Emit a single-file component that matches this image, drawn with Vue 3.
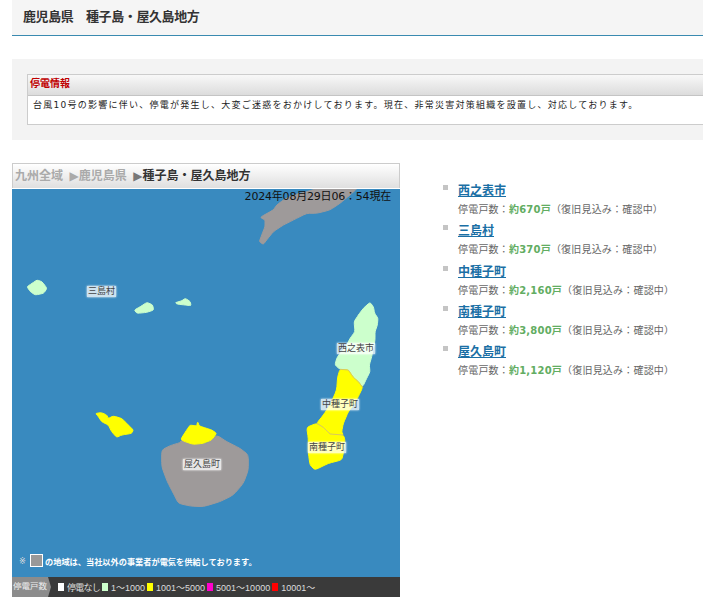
<script setup>
const green = '#ccffcc'
const yellow = '#ffff00'
const gray = '#9e9a9a'

// outlines traced on the reference, [origin x, origin y, then x,y pairs at 3x]
const shapes = [
  { fill: gray, o: [240, 185], p: '60,97 100,75 110,60 130,45 160,30 200,20 250,5 350,0 350,12 330,30 300,55 270,75 230,85 200,85 160,105 130,120 100,140 80,165 70,178 58,170 65,150 75,125 75,105' },
  { fill: green, o: [12, 190], p: '45,290 60,280 75,270 90,275 105,295 95,310 70,315 55,305' },
  { fill: green, o: [12, 190], p: '367,360 385,350 405,337 422,345 425,360 405,367 375,370' },
  { fill: green, o: [12, 190], p: '490,338 510,332 520,325 535,335 537,347 520,345 495,342' },
  { fill: green, o: [290, 290], p: '240,37 250,50 254,70 264,85 262,105 255,125 255,150 250,175 245,200 238,225 240,245 230,265 218,290 205,275 190,262 175,240 150,238 135,225 140,205 150,190 165,175 180,145 195,125 192,95 205,75 220,55' },
  { fill: yellow, o: [290, 290], p: '150,238 175,240 190,262 205,275 218,292 205,320 190,345 175,365 160,400 155,425 160,435 120,432 100,412 80,400 100,375 120,345 140,300 143,260' },
  { fill: yellow, o: [290, 290], p: '80,400 100,412 120,432 160,435 165,450 160,490 155,510 115,520 75,540 60,525 55,490 55,445 50,412' },
  { fill: gray, o: [80, 400], p: '305,120 340,130 380,132 410,105 440,125 480,145 505,165 505,210 490,250 460,285 420,305 370,320 330,318 295,310 280,280 262,245 245,200 245,150 270,137 300,128' },
  { fill: yellow, o: [80, 400], p: '302,118 320,90 330,75 350,78 353,65 358,78 380,85 395,90 410,100 395,120 370,130 340,133 315,125' },
  { fill: yellow, o: [80, 400], p: '47,40 65,38 80,45 85,55 100,48 125,55 145,75 160,90 155,100 125,105 110,112 95,95 85,75 65,65 55,50' }
]

const borders = [
  { o: [290, 290], p: '150,238 175,240 190,262 205,275 218,292' },
  { o: [290, 290], p: '80,400 100,412 120,432 160,435' }
]

function toPoints(shape) {
  return shape.p.split(' ').map(pair => {
    const [x, y] = pair.split(',').map(Number)
    return [shape.o[0] + x / 3 - 12, shape.o[1] + y / 3 - 189]
  })
}

// takes the edge off the traced corners, keeps the bays and capes
function toPath(shape) {
  const pts = toPoints(shape)
  const at = (a, b, t) => (a[0] + (b[0] - a[0]) * t).toFixed(1) + ' ' + (a[1] + (b[1] - a[1]) * t).toFixed(1)
  let d = ''
  pts.forEach((pt, i) => {
    const prev = pts[(i + pts.length - 1) % pts.length]
    const next = pts[(i + 1) % pts.length]
    d += (i ? ' L' : 'M') + at(prev, pt, 0.75) + ' Q' + pt[0].toFixed(1) + ' ' + pt[1].toFixed(1) + ' ' + at(pt, next, 0.25)
  })
  return d + 'Z'
}

function toLine(shape) {
  return toPoints(shape).map(pt => pt[0].toFixed(1) + ',' + pt[1].toFixed(1)).join(' ')
}

const labels = [
  { name: '三島村', x: 75, y: 97 },
  { name: '西之表市', x: 325, y: 154 },
  { name: '中種子町', x: 309, y: 210 },
  { name: '南種子町', x: 296, y: 253 },
  { name: '屋久島町', x: 171, y: 270 }
]

const towns = [
  { name: '西之表市', count: '670' },
  { name: '三島村', count: '370' },
  { name: '中種子町', count: '2,160' },
  { name: '南種子町', count: '3,800' },
  { name: '屋久島町', count: '1,120' }
]

const legend = [
  { color: '#ffffff', text: '停電なし' },
  { color: '#ccffcc', text: '1～1000' },
  { color: '#ffff00', text: '1001～5000' },
  { color: '#ff00cc', text: '5001～10000' },
  { color: '#ff0000', text: '10001～' }
]
</script>

<template>
  <div class="page">
    <header class="title">
      <h1>鹿児島県　種子島・屋久島地方</h1>
    </header>

    <section class="notice">
      <div class="notice-box">
        <h2>停電情報</h2>
        <p>台風10号の影響に伴い、停電が発生し、大変ご迷惑をおかけしております。現在、非常災害対策組織を設置し、対応しております。</p>
      </div>
    </section>

    <div class="content">
      <div class="panel">
        <div class="crumbs">
          <span class="off">九州全域</span>
          <span class="off arrow">▶鹿児島県</span>
          <span class="arrow"><i>▶</i>種子島・屋久島地方</span>
        </div>
        <div class="map">
          <svg viewBox="0 0 388 388" width="388" height="388">
            <path
              v-for="(s, i) in shapes"
              :key="i"
              :d="toPath(s)"
              :fill="s.fill"
              :stroke="s.fill"
              stroke-width="1"
              stroke-linejoin="round"
            />
            <polyline
              v-for="(b, i) in borders"
              :key="'b' + i"
              :points="toLine(b)"
              fill="none"
              stroke="#d8c860"
              stroke-width="1"
            />
          </svg>
          <span
            v-for="l in labels"
            :key="l.name"
            class="pin"
            :style="{ left: l.x + 'px', top: l.y + 'px' }"
          >{{ l.name }}</span>
          <div class="stamp">2024年08月29日06：54現在</div>
          <div class="note"><em>※</em><b></b>の地域は、当社以外の事業者が電気を供給しております。</div>
        </div>
        <div class="legend">
          <span class="legend-head">停電戸数</span>
          <span v-for="l in legend" :key="l.text" class="legend-item">
            <i :style="{ background: l.color }"></i>{{ l.text }}
          </span>
        </div>
      </div>

      <ul class="towns">
        <li v-for="t in towns" :key="t.name">
          <a href="#">{{ t.name }}</a>
          <p>停電戸数：<strong>約{{ t.count }}戸</strong>（復旧見込み：確認中）</p>
        </li>
      </ul>
    </div>
  </div>
</template>

<style>
html, body { margin: 0; background: #fff; overflow: hidden; }
</style>

<style scoped>
.page {
  width: 703px;
  height: 603px;
  overflow: hidden;
  font-family: "DejaVu Sans", "Noto Sans CJK JP", sans-serif;
  color: #333;
}

.title {
  margin-left: 12px;
  height: 35px;
  box-sizing: content-box;
  background: #f5f5f5;
  border-bottom: 1px solid #3a8ab0;
  display: flex;
  align-items: flex-start;
  padding-left: 11px;
}
.title h1 {
  margin: 8px 0 0;
  font-size: 13px;
  line-height: 18px;
  font-weight: bold;
  letter-spacing: -0.4px;
  color: #333;
}

.notice {
  margin: 23px 0 23px 12px;
  padding: 15px 0 15px 15px;
  background: #f3f3f3;
}
.notice-box {
  width: 700px;
  height: 49px;
  background: #fff;
  border: 1px solid #ccc;
}
.notice-box h2 {
  margin: 0;
  height: 20px;
  line-height: 18px;
  padding-left: 2px;
  font-size: 10px;
  font-weight: bold;
  color: #c00000;
  background: linear-gradient(#f8f8f8, #dcdcdc);
  border-bottom: 1px solid #c4c4c4;
}
.notice-box p {
  margin: 0;
  padding: 2px 0 0 5px;
  font-size: 9px;
  line-height: 14px;
  letter-spacing: 1.25px;
  white-space: nowrap;
  color: #222;
}

.content {
  display: flex;
  margin-left: 12px;
}
.panel {
  width: 388px;
  flex: none;
}
.crumbs {
  height: 25px;
  display: flex;
  align-items: center;
  padding: 0 0 3px 2px;
  gap: 6.5px;
  box-sizing: border-box;
  border: 1px solid #ccc;
  border-bottom: 0;
  background: linear-gradient(#ffffff, #dfdfdf);
  font-size: 12px;
  font-weight: bold;
  color: #333;
  white-space: nowrap;
}
.crumbs .off { color: #aaa; }
.crumbs i { font-style: normal; color: #777; }

.map {
  position: relative;
  height: 388px;
  margin-top: 1px;
  background: #398abf;
  overflow: hidden;
}
.map svg { display: block; }
.pin {
  position: absolute;
  font-size: 9px;
  line-height: 11px;
  padding: 0 1px;
  color: #444;
  background: rgba(255, 255, 255, 0.75);
  box-shadow: 0 0 2px #fff;
  white-space: nowrap;
}
.stamp {
  position: absolute;
  top: 1px;
  right: 9px;
  font-size: 11px;
  line-height: 14px;
  letter-spacing: -0.2px;
  color: #111;
  white-space: nowrap;
}
.note {
  position: absolute;
  left: 7px;
  top: 365px;
  display: flex;
  align-items: center;
  font-size: 8.2px;
  font-weight: bold;
  color: #fff;
  white-space: nowrap;
}
.note em {
  font-style: normal;
  font-weight: normal;
  color: #ddd;
  width: 11px;
}
.note b {
  width: 11px;
  height: 11px;
  background: #999;
  border: 1px solid #fff;
  margin-right: 2px;
}

.legend {
  height: 20px;
  display: flex;
  align-items: center;
  background: #3a3a3a;
  color: #ddd;
  font-family: "Liberation Sans", "Noto Sans CJK JP", sans-serif;
  font-size: 9px;
  white-space: nowrap;
}
.legend-head {
  position: relative;
  box-sizing: border-box;
  height: 20px;
  line-height: 19px;
  width: 36px;
  padding-left: 1px;
  font-size: 8.5px;
  background: #8c8c8c;
  color: #eee;
  margin-right: 10px;
  flex: none;
}
.legend-head::after {
  content: "";
  position: absolute;
  left: 36px;
  top: 0;
  border-left: 3px solid #8c8c8c;
  border-top: 10px solid transparent;
  border-bottom: 10px solid transparent;
}
.legend-item {
  display: flex;
  align-items: center;
  margin-right: 2px;
}
.legend-item:nth-child(2) { letter-spacing: -0.75px; }
.legend-item i {
  width: 6px;
  height: 8px;
  margin-right: 3px;
}

.towns {
  list-style: none;
  margin: 0 0 0 43px;
  padding: 20px 0 0 15px;
}
.towns li {
  position: relative;
  height: 40.25px;
}
.towns li::before {
  content: "";
  position: absolute;
  left: -15px;
  top: 2px;
  width: 5px;
  height: 5px;
  background: #c4c4c4;
}
.towns a {
  display: block;
  height: 19px;
  font-size: 12px;
  line-height: 17px;
  font-weight: bold;
  color: #1a6fa5;
  text-decoration: underline;
}
.towns p {
  margin: 0;
  font-size: 10px;
  line-height: 16px;
  letter-spacing: 0.2px;
  color: #666;
  white-space: nowrap;
}
.towns strong { color: #62ad62; }
</style>
